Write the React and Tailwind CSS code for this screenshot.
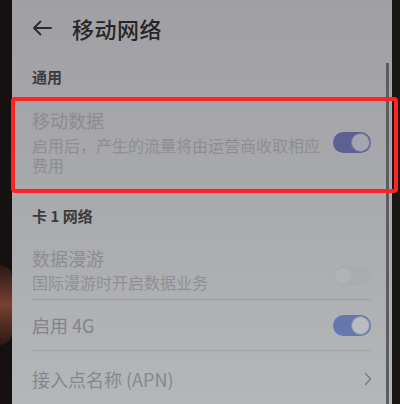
import React from 'react';

const font = { fontFamily: '"Noto Sans CJK SC", "Noto Sans", sans-serif' };

function Toggle({ on, tone = 'dim' }) {
  if (!on) {
    return (
      <div className="w-[38px] h-[20px] rounded-full bg-[#a9abae] flex items-center pl-[2px] opacity-70">
        <div className="w-[16px] h-[16px] rounded-full bg-[#b2b4b7]" />
      </div>
    );
  }
  return (
    <div className={`w-[38px] h-[21px] rounded-full flex items-center justify-end pr-[1px] ${tone === 'dim' ? 'bg-[#5d6090]' : 'bg-[#6676ae]'}`}>
      <div className={`w-[19px] h-[19px] rounded-full border ${tone === 'dim' ? 'bg-[#a6a7ae] border-[#7e8096]' : 'bg-[#b9bcc2] border-[#8890ac]'}`} />
    </div>
  );
}

export default function App() {
  return (
    <div className="w-[400px] h-[404px] flex bg-[#141010] overflow-hidden" style={font}>
      {/* phone edge */}
      <div className="w-[12px] shrink-0 flex flex-col">
        <div className="h-[265px] bg-[#151111]" />
        <div className="h-[80px] bg-gradient-to-b from-[#2a1915] via-[#7a4033] to-[#2a1915] rounded-r-full" />
        <div className="flex-1 bg-[#151111]" />
      </div>

      {/* screen */}
      <div className="relative w-[380px] shrink-0 bg-gradient-to-b from-[#a0a0a4] via-[#a9aaad] to-[#b4b7b9] flex flex-col pl-[20px] pr-[21px]">
        {/* header */}
        <div className="h-[56px] flex items-center shrink-0">
          <svg width="20" height="16" viewBox="0 0 20 16" fill="none" stroke="#2c2c2e" strokeWidth="1.8" strokeLinecap="round" strokeLinejoin="round">
            <path d="M19 8H2M8.5 1.5L2 8l6.5 6.5" />
          </svg>
          <span className="ml-[20px] text-[22px] leading-none text-[#262628] font-medium tracking-[0.5px]">移动网络</span>
        </div>

        <div className="h-[42px] flex items-center text-[15px] font-bold text-[#3b3b3e] shrink-0">通用</div>

        {/* 移动数据 */}
        <div className="h-[94px] flex items-start pt-[10px] shrink-0">
          <div className="flex-1 pr-[6px]">
            <div className="text-[18px] leading-[24px] text-[#8b8b90]">移动数据</div>
            <div className="mt-[3px] text-[16px] leading-[20px] text-[#8d8d92]">启用后，产生的流量将由运营商收取相应费用</div>
          </div>
          <div className="mt-[24px]">
            <Toggle on tone="dim" />
          </div>
        </div>

        <div className="h-[48px] flex items-center text-[15px] font-bold text-[#3b3b3e] shrink-0">卡 1 网络</div>

        {/* 数据漫游 */}
        <div className="h-[60px] flex items-start pt-[6px] shrink-0 border-b border-[#9c9ea1]">
          <div className="flex-1">
            <div className="text-[18px] leading-[24px] text-[#8c8d91]">数据漫游</div>
            <div className="mt-[2px] text-[16px] leading-[20px] text-[#8e8f93]">国际漫游时开启数据业务</div>
          </div>
          <div className="mt-[20px]">
            <Toggle on={false} />
          </div>
        </div>

        {/* 启用 4G */}
        <div className="h-[51px] flex items-center shrink-0 border-b border-[#a0a2a5]">
          <div className="flex-1 text-[18px] text-[#838489]">启用 4G</div>
          <Toggle on tone="bright" />
        </div>

        {/* APN */}
        <div className="h-[56px] flex items-center shrink-0">
          <div className="flex-1 text-[18px] text-[#86878b]">接入点名称 (APN)</div>
          <svg width="8" height="14" viewBox="0 0 8 14" fill="none" stroke="#7a7c80" strokeWidth="1.4" strokeLinecap="round" strokeLinejoin="round" className="mr-[-1px]">
            <path d="M1.5 1.5L6.5 7l-5 5.5" />
          </svg>
        </div>

        {/* scrollbar */}
        <div className="absolute left-[374px] top-[63px] bottom-0 w-[3px] bg-[#5c5d60]" />

        {/* annotation */}
        <div className="absolute left-[-1px] top-[97px] w-[387px] h-[96px] border-[4px] border-[#ff2323] rounded-[4px]" />
      </div>

      <div className="flex-1 bg-[#1a1717]" />
    </div>
  );
}
